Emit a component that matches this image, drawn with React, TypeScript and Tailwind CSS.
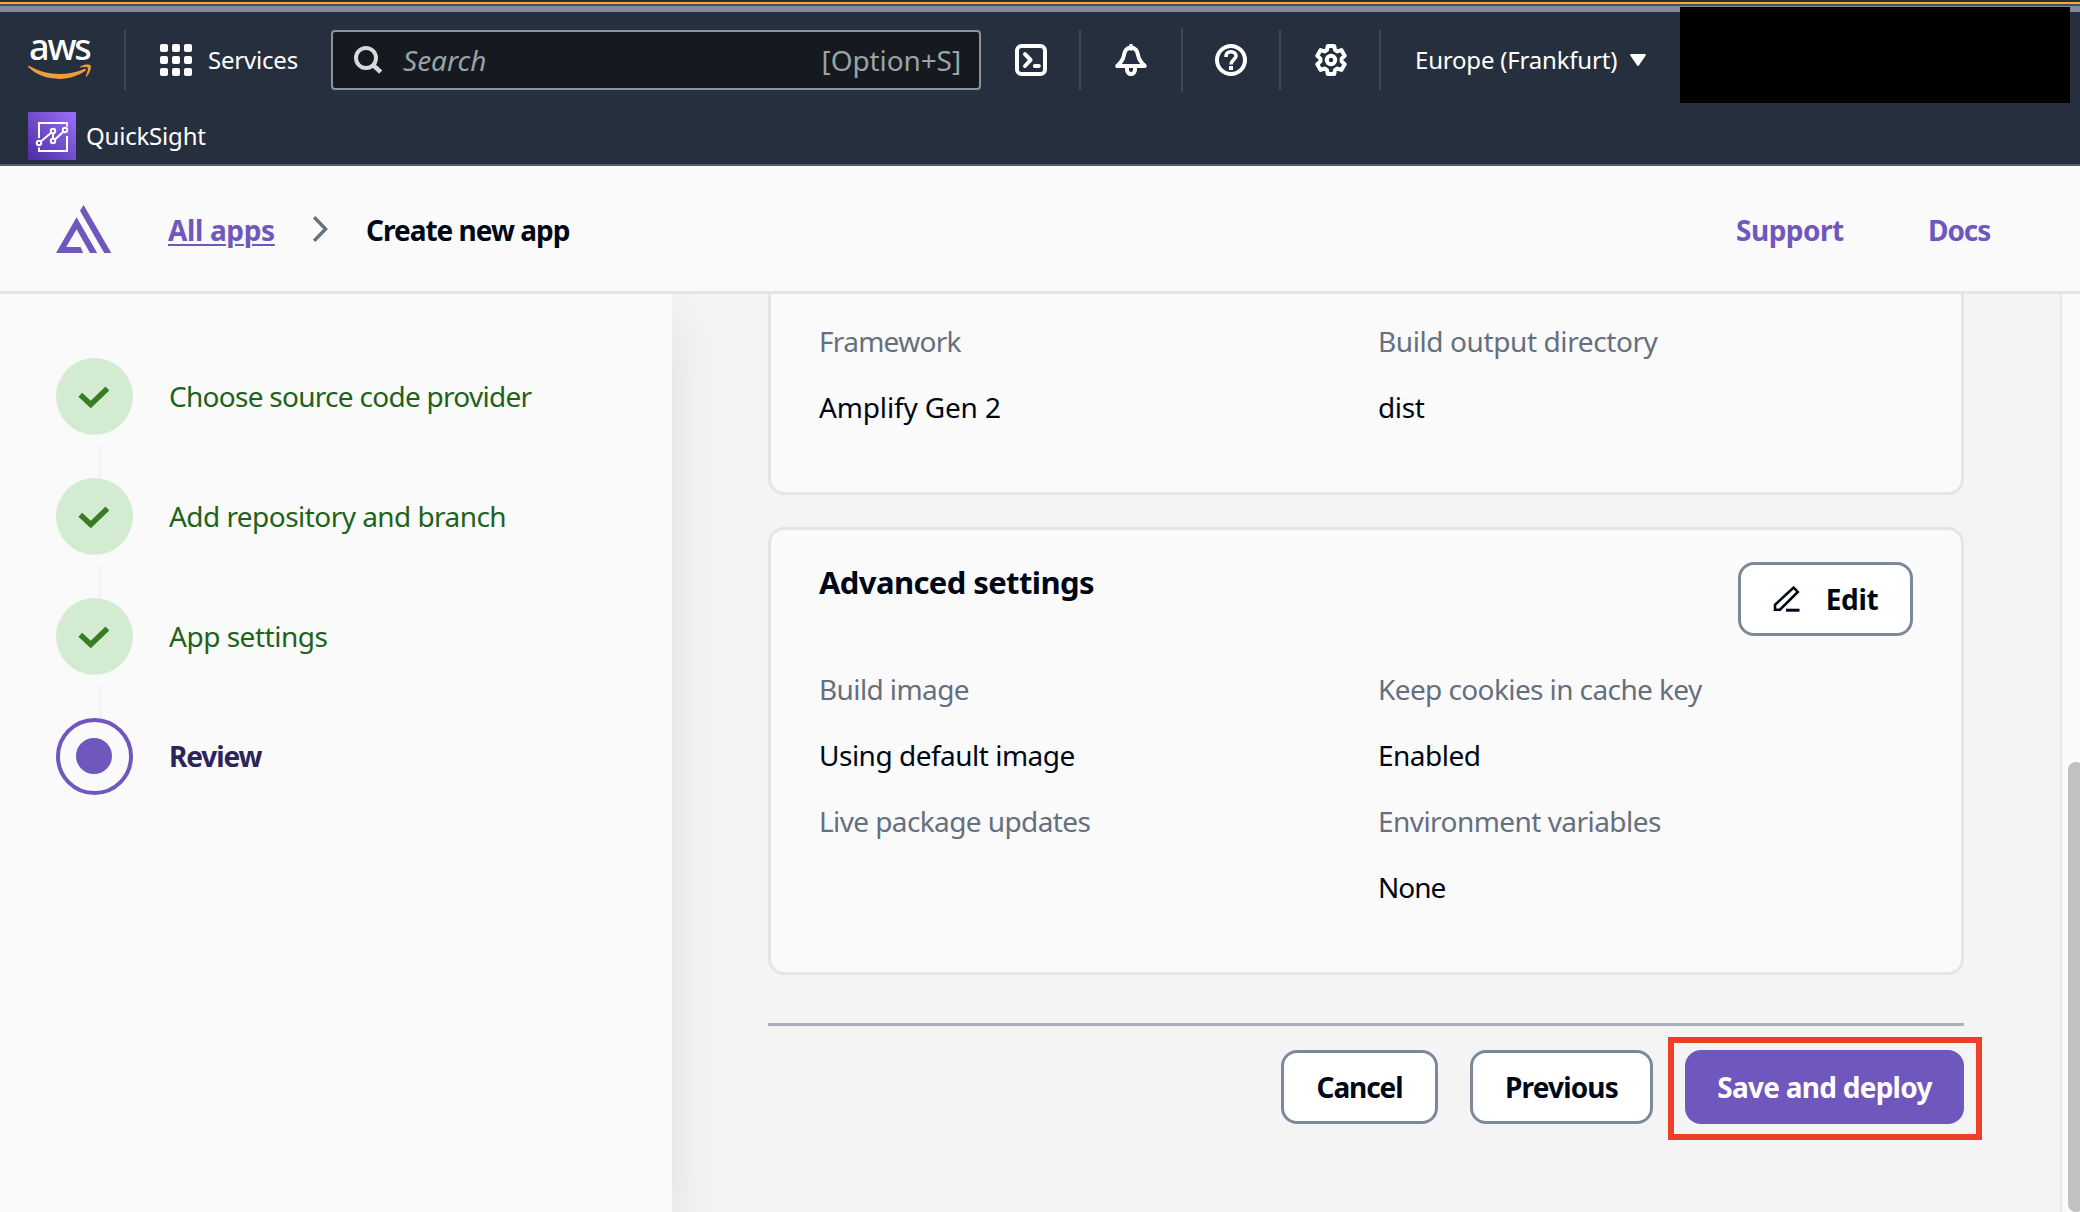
import type { ReactNode } from "react";

function AwsLogo() {
  return (
    <div className="relative flex h-[60px] w-[64px] shrink-0 flex-col text-white">
      <span className="relative -top-[13px] left-[1px] whitespace-nowrap text-[36px] leading-[60px] font-medium tracking-[-2.2px]">aws</span>
      <svg className="absolute top-[34px] left-0" width="64" height="16" viewBox="0 0 64 16" fill="#ec9d3c">
        <path d="M0.4 1.9C0 2.6.2 3 .7 3.6 8.500 11 19 14.900 31.500 14.900c9 0 18.800-2.900 26-8.100 1.300-1 .1-2.400-1.200-1.800-8 3.400-16.700 5-24.600 5C20.300 10 10.600 7.300 1.400 2 1 1.700.6 1.600.4 1.900Z" />
        <path d="M52 2.700C55.500.3 61.700.100 62.600 1.300c.9 1.200-.3 8-3.900 11.100-.6.500-1.200.2-.9-.5.9-2.200 2.800-7 1.900-8.100-.9-1.200-5.300-.6-7.300-.3-.6.100-.8-.5-.4-.8Z" />
      </svg>
    </div>
  );
}

function CloudShellIcon() {
  return (
    <svg width="32" height="32" viewBox="0 0 32 32" fill="none" stroke="#fff" strokeWidth="4" strokeLinecap="round" strokeLinejoin="round">
      <rect x="2" y="2" width="28" height="28" rx="4.500" />
      <path d="M10 10.200 15.600 16 10 22" />
      <path d="M19.800 22h4" />
    </svg>
  );
}

function BellIcon() {
  return (
    <svg width="34" height="32" viewBox="0 0 34 32" fill="none" stroke="#fff" strokeWidth="4" strokeLinejoin="round">
      <path d="M3.200 22h27.600C27 18.300 24.900 16 24.300 12c-.7-4.800-2.900-8.200-7.300-8.200S10.400 7.200 9.700 12C9.100 16 7 18.300 3.200 22Z" />
      <path d="M17 1.800v3" strokeLinecap="round" />
      <path d="M13 23v2.800a4 4.200 0 0 0 8 0V23" />
    </svg>
  );
}

function HelpIcon() {
  return (
    <svg width="32" height="32" viewBox="0 0 32 32" fill="none" stroke="#fff" strokeWidth="4">
      <circle cx="16" cy="16" r="14" />
      <path d="M11 12.900c0-3.500 2.100-5.100 5-5.100s5 1.700 5 4.300c0 3.500-5 3.800-5 8.400" strokeWidth="3.600" />
      <path d="M16 22v4" />
    </svg>
  );
}

function GearIcon() {
  return (
    <svg width="32" height="32" viewBox="0 0 32 32" fill="none" stroke="#fff" strokeWidth="4" strokeLinejoin="round">
      <path d="M12.800 2h6.400l.9 4.100 2.300 1.300 4-1.300 3.300 5.600-3.100 2.900v2.800l3.100 2.900-3.300 5.600-4-1.300-2.300 1.300-.9 4.100h-6.400l-.9-4.100-2.300-1.300-4 1.300-3.300-5.600 3.100-2.900v-2.800l-3.100-2.900 3.300-5.600 4 1.300 2.300-1.300Z" />
      <circle cx="16" cy="16" r="4.200" />
    </svg>
  );
}

function QuickSightIcon() {
  return (
    <div className="flex h-12 w-12 shrink-0 items-center justify-center bg-linear-to-tr from-[#4d2ba5] to-[#9c70fa]">
      <svg width="48" height="48" viewBox="0 0 48 48" fill="none" stroke="#fff" strokeWidth="2">
        <path d="M11 26V11h28v3.500M39 24v15H11v-3.500" />
        <path d="m12.800 29.500 10.400-8.700M25 21.500v5M27 27.600l8.300-7.800" />
        <circle cx="11" cy="31" r="2.200" />
        <circle cx="25" cy="19" r="2.200" />
        <circle cx="25" cy="29" r="2.200" />
        <circle cx="37" cy="18" r="2.200" />
      </svg>
    </div>
  );
}

function AmplifyLogo() {
  return (
    <svg width="56" height="48" viewBox="0 0 56 48" fill="#7057bd" className="shrink-0">
      <path d="M20.600 12.300 41.200 48H34L20.600 24.300 10.200 42H24.500L27.200 48H0Z" />
      <path d="M27.600 0 55.300 48H48.200L24 5.800Z" />
    </svg>
  );
}

const Divider = ({ tall = false }: { tall?: boolean }) => (
  <div className={tall ? "h-16 w-0.5 bg-[#414750]" : "h-[60px] w-0.5 bg-[#414750]"} />
);

function Field({ label, value, className = "", valueClass = "" }: { label: string; value?: string; className?: string; valueClass?: string }) {
  return (
    <div className="flex h-[132px] flex-col text-[28px] leading-[66px] whitespace-nowrap">
      <span className={"text-[#656f80] " + className}>{label}</span>
      {value && <span className={"text-[#000716] " + valueClass}>{value}</span>}
    </div>
  );
}

function Step({ children, className, last = false }: { children: ReactNode; className: string; last?: boolean }) {
  return (
    <li className="flex h-[120px]">
      <div className="relative w-[113px] shrink-0">
        {last ? (
          <div className="flex h-[77px] w-[77px] items-center justify-center rounded-full border-4 border-[#7057bd] pr-[1px] pb-[1px]">
            <div className="h-9 w-9 rounded-full bg-[#7057bd]" />
          </div>
        ) : (
          <>
            <div className="flex h-[77px] w-[77px] items-center justify-center rounded-full bg-[#d3ebd1] pr-[1px]">
              <svg width="32" height="24" viewBox="0 0 32 24" fill="none" stroke="#377d23" strokeWidth="5.400">
                <path d="m2.300 9.800 10.500 9.700L29.400 3.500" />
              </svg>
            </div>
            <div className="mt-[11px] ml-[42px] h-8 w-1 bg-[#f4f4f4]" />
          </>
        )}
      </div>
      <span className={"text-[28px] leading-[76px] whitespace-nowrap " + className}>{children}</span>
    </li>
  );
}

function Button({ children, className }: { children: ReactNode; className: string }) {
  return (
    <button className={"flex h-[74px] shrink-0 items-center justify-center rounded-2xl text-[28px] leading-[74px] font-bold whitespace-nowrap " + className}>
      {children}
    </button>
  );
}

const outlined = "border-3 border-[#7d8998] bg-white text-[#000716] ";

export default function App() {
  return (
    <div className="relative flex h-[1212px] w-[2080px] flex-col overflow-hidden bg-[#f4f4f4] font-['Noto_Sans','Open_Sans',sans-serif]">
      <div className="h-0.5 bg-[#232f3e]" />
      <div className="h-0.5 bg-[#f4a83a]" />
      <div className="h-0.5 bg-[#454f5f]" />
      <div className="h-1.5 bg-[#818a9c]" />

      <header className="flex h-[154px] shrink-0 flex-col border-b-2 border-[#545b64] bg-[#262f3e] text-white">
        <nav className="flex h-[96px] items-center pl-7">
          <AwsLogo />
          <div className="ml-8">
            <Divider />
          </div>
          <div className="ml-[34px] grid grid-cols-3 gap-1">
            {Array.from({ length: 9 }, (_, i) => (
              <div key={i} className="h-2 w-2 rounded-[2px] bg-white" />
            ))}
          </div>
          <span className="ml-[16px] w-[92px] text-[24px] leading-[60px] tracking-[-0.2px] whitespace-nowrap">Services</span>
          <div className="ml-[31px] flex h-[60px] w-[650px] items-center rounded-[4px] border-2 border-[#879596] bg-[#16191f] text-[28px] text-[#95a5a6]">
            <svg className="ml-[21px]" width="29" height="29" viewBox="0 0 29 29" fill="none" stroke="#d5dbdb" strokeWidth="4">
              <circle cx="12" cy="12" r="10" />
              <path d="m18.700 18.700 8 7.500" strokeWidth="4.500" />
            </svg>
            <span className="ml-[20px] italic">Search</span>
            <span className="mr-[18px] ml-auto tracking-[-0.1px]">[Option+S]</span>
          </div>
          <div className="ml-[34px]">
            <CloudShellIcon />
          </div>
          <div className="ml-[32px]">
            <Divider />
          </div>
          <div className="ml-[33px]">
            <BellIcon />
          </div>
          <div className="ml-[33px]">
            <Divider tall />
          </div>
          <div className="ml-8">
            <HelpIcon />
          </div>
          <div className="ml-8">
            <Divider />
          </div>
          <div className="ml-[34px]">
            <GearIcon />
          </div>
          <div className="ml-8">
            <Divider />
          </div>
          <span className="ml-[34px] w-[203px] text-[24px] leading-[60px] tracking-[-0.2px] whitespace-nowrap">Europe (Frankfurt)</span>
          <svg className="ml-[12px]" width="16" height="12" viewBox="0 0 16 12" fill="#fff">
            <path d="M1.200 0h13.600c1 0 1.300.7.900 1.500L9 11.200c-.5.900-1.500.9-2 0L.3 1.500C-.1.700.2 0 1.200 0Z" />
          </svg>
        </nav>
        <div className="flex h-14 items-center gap-[10px] pl-7">
          <QuickSightIcon />
          <span className="text-[24px] leading-[48px] tracking-[-0.2px]">QuickSight</span>
        </div>
      </header>
      <div className="absolute top-[7px] left-[1680px] h-24 w-[390px] bg-black" />

      <div className="flex h-32 shrink-0 items-center border-b-3 border-[#e4e4e9] bg-[#fafafa] pr-[89px] pl-14 text-[28px] leading-[40px] font-bold whitespace-nowrap text-[#7057bd]">
        <AmplifyLogo />
        <a className="ml-14 w-[107px] pt-0.5 tracking-[-0.35px] underline decoration-2 underline-offset-[3px]">All apps</a>
        <svg className="ml-[38px]" width="15" height="26" viewBox="0 0 15 26" fill="none" stroke="#687080" strokeWidth="3.400">
          <path d="M1.200 1.200 12.600 13 1.200 24.800" />
        </svg>
        <span className="ml-[38px] pt-0.5 tracking-[-1px] text-[#000716]">Create new app</span>
        <a className="ml-auto w-[110px] pt-0.5 tracking-[-0.5px]">Support</a>
        <a className="ml-[82px] w-[63px] pt-0.5 tracking-[-1.1px]">Docs</a>
      </div>

      <div className="flex min-h-0 flex-1 overflow-hidden">
        <aside className="w-[672px] shrink-0 bg-[#fafafa] shadow-[4px_24px_48px_0_rgba(0,0,0,0.08)]">
          <ol className="pt-16 pl-14">
            <Step className="tracking-[-0.72px] text-[#21621a]">Choose source code provider</Step>
            <Step className="tracking-[-0.55px] text-[#21621a]">Add repository and branch</Step>
            <Step className="tracking-[-0.48px] text-[#21621a]">App settings</Step>
            <Step className="font-bold tracking-[-1.1px] text-[#2c245a]" last>Review</Step>
          </ol>
        </aside>

        <main className="ml-24 w-[1196px] shrink-0">
          <section className="grid h-[201px] grid-cols-[559px_1fr] rounded-b-2xl border-3 border-t-0 border-[#e4e4e9] bg-[#fafafa] pt-[14px] pl-[48px]">
            <Field label="Framework" value="Amplify Gen 2" className="tracking-[-0.7px]" valueClass="tracking-[-0.15px]" />
            <Field label="Build output directory" value="dist" className="tracking-[-0.4px]" valueClass="tracking-[-0.4px]" />
          </section>

          <section className="mt-[32px] h-[448px] rounded-2xl border-3 border-[#e4e4e9] bg-[#fafafa] pt-8 pr-[48px] pl-[48px]">
            <div className="flex h-[94px] items-start justify-between">
              <h2 className="text-[31px] leading-[40px] font-bold tracking-[-0.6px] text-[#000716]">Advanced settings</h2>
              <Button className={outlined + "w-[175px] gap-[25px] tracking-[-0.4px]"}>
                <svg width="28" height="26" viewBox="0 0 28 26" fill="none" stroke="#000716" strokeWidth="2.600">
                  <path d="M2 23.700v-4.900L20.600 1.600l4.200 4.300L7 23.700Z" />
                  <path d="M13 24.200h13.500" strokeWidth="3" />
                </svg>
                Edit
              </Button>
            </div>
            <div className="grid grid-cols-[559px_1fr]">
              <Field label="Build image" value="Using default image" className="tracking-[-0.6px]" valueClass="tracking-[-0.5px]" />
              <Field label="Keep cookies in cache key" value="Enabled" className="tracking-[-0.6px]" valueClass="tracking-[-0.5px]" />
              <Field label="Live package updates" className="tracking-[-0.6px]" />
              <Field label="Environment variables" value="None" className="tracking-[-0.55px]" valueClass="tracking-[-1px]" />
            </div>
          </section>

          <div className="mt-[48px] h-[3px] bg-[#aab0bc]" />
          <div className="mt-6 flex justify-end gap-8">
            <Button className={outlined + "w-[157px] tracking-[-1.1px]"}>Cancel</Button>
            <Button className={outlined + "w-[183px] tracking-[-0.85px]"}>Previous</Button>
            <div className="relative">
              <Button className="w-[279px] bg-[#7057bd] tracking-[-0.75px] text-white">Save and deploy</Button>
              <div className="absolute -top-[13px] -left-[17px] h-[103px] w-[314px] border-6 border-[#ee4026]" />
            </div>
          </div>
        </main>

        <div className="relative ml-auto w-5 shrink-0 border-l-2 border-[#e8e8e8] bg-[#fafafa]">
          <div className="absolute top-[468px] left-[6px] h-[450px] w-4 rounded-[8px] bg-[#c1c1c1]" />
        </div>
      </div>
    </div>
  );
}
